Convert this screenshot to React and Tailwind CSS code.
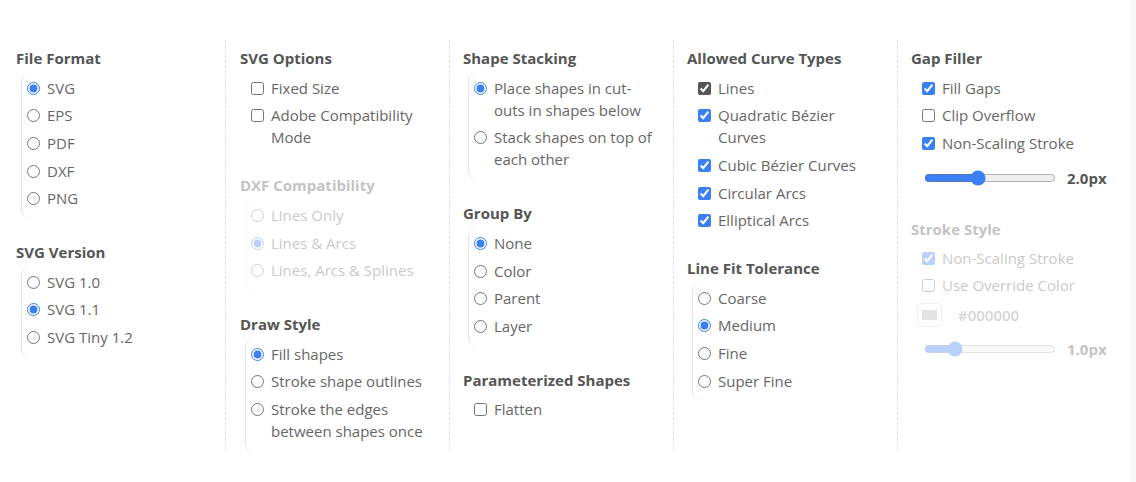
import React, { useState } from 'react';

const Section = ({ title, disabled, children }) => (
  <div className={disabled ? 'opacity-35 pointer-events-none' : ''}>
    <h3 className="text-[15px] font-bold leading-[22px] text-[#555]">{title}</h3>
    <div className="mt-[5px]">{children}</div>
  </div>
);

const RadioGroup = ({ name, options, value, onChange }) => (
  <div className="ml-[5px] flex flex-col rounded-l-lg border-l border-[#e3e3e3] pb-[6px] pl-[5px]">
    {options.map(opt => (
      <label key={opt} className="flex items-start gap-[7px] py-[2.8px] text-[15px] leading-[22px] text-[#666]">
        <input
          type="radio"
          name={name}
          checked={value === opt}
          onChange={() => onChange(opt)}
          className="mt-[5px] h-[13px] w-[13px] shrink-0 accent-[#3b7ff5]"
        />
        <span>{opt}</span>
      </label>
    ))}
  </div>
);

const CheckGroup = ({ items, values, onToggle }) => (
  <div className="flex flex-col pl-[11px]">
    {items.map(item => (
      <label key={item.label} className="flex items-start gap-[7px] py-[2.8px] text-[15px] leading-[22px] text-[#666]">
        <input
          type="checkbox"
          checked={!!values[item.label]}
          onChange={() => onToggle(item.label)}
          className={`mt-[5px] h-[13px] w-[13px] shrink-0 ${item.dark ? 'accent-[#555]' : 'accent-[#3b7ff5]'}`}
        />
        <span>{item.label}</span>
      </label>
    ))}
  </div>
);

const Slider = ({ value, onChange }) => (
  <div className="flex h-[22px] items-center pl-[13px]">
    <input
      type="range"
      min="0"
      max="5"
      step="0.1"
      value={value}
      onChange={e => onChange(parseFloat(e.target.value))}
      className="w-[132px] accent-[#3b7ff5]"
    />
    <span className="ml-[11px] text-[15px] font-bold leading-[22px] text-[#555]">{value.toFixed(1)}px</span>
  </div>
);

export default function App() {
  const [format, setFormat] = useState('SVG');
  const [version, setVersion] = useState('SVG 1.1');
  const [dxf, setDxf] = useState('Lines & Arcs');
  const [draw, setDraw] = useState('Fill shapes');
  const [stacking, setStacking] = useState('Place shapes in cut-outs in shapes below');
  const [group, setGroup] = useState('None');
  const [tolerance, setTolerance] = useState('Medium');
  const [gapWidth, setGapWidth] = useState(2.0);
  const [strokeWidth, setStrokeWidth] = useState(1.0);
  const [checks, setChecks] = useState({
    'Lines': true,
    'Quadratic Bézier Curves': true,
    'Cubic Bézier Curves': true,
    'Circular Arcs': true,
    'Elliptical Arcs': true,
    'Fill Gaps': true,
    'Non-Scaling Stroke': true,
    'stroke:Non-Scaling Stroke': true,
  });

  const toggle = key => setChecks(prev => ({ ...prev, [key]: !prev[key] }));

  return (
    <div className="flex h-[482px] w-full bg-white" style={{ fontFamily: '"Open Sans", "Noto Sans", sans-serif' }}>
      <div className="w-[1130px]">
        <div className="mt-10 flex h-[410px] pl-4">
          {/* column 1 */}
          <div className="flex w-[210px] flex-col gap-[23px] border-r border-dashed border-[#dcdcdc] pr-[13px] pt-[7px]">
            <Section title="File Format">
              <RadioGroup name="format" options={['SVG', 'EPS', 'PDF', 'DXF', 'PNG']} value={format} onChange={setFormat} />
            </Section>
            <Section title="SVG Version">
              <RadioGroup name="version" options={['SVG 1.0', 'SVG 1.1', 'SVG Tiny 1.2']} value={version} onChange={setVersion} />
            </Section>
          </div>

          {/* column 2 */}
          <div className="flex w-[224px] flex-col gap-[23px] border-r border-dashed border-[#dcdcdc] pl-[14px] pr-[13px] pt-[7px]">
            <Section title="SVG Options">
              <CheckGroup items={[{ label: 'Fixed Size' }, { label: 'Adobe Compatibility Mode' }]} values={checks} onToggle={toggle} />
            </Section>
            <Section title="DXF Compatibility" disabled>
              <RadioGroup name="dxf" options={['Lines Only', 'Lines & Arcs', 'Lines, Arcs & Splines']} value={dxf} onChange={setDxf} />
            </Section>
            <Section title="Draw Style">
              <RadioGroup
                name="draw"
                options={['Fill shapes', 'Stroke shape outlines', 'Stroke the edges between shapes once']}
                value={draw}
                onChange={setDraw}
              />
            </Section>
          </div>

          {/* column 3 */}
          <div className="flex w-[224px] flex-col gap-[23px] border-r border-dashed border-[#dcdcdc] pl-[13px] pr-[13px] pt-[7px]">
            <Section title="Shape Stacking">
              <RadioGroup
                name="stacking"
                options={['Place shapes in cut-outs in shapes below', 'Stack shapes on top of each other']}
                value={stacking}
                onChange={setStacking}
              />
            </Section>
            <Section title="Group By">
              <RadioGroup name="group" options={['None', 'Color', 'Parent', 'Layer']} value={group} onChange={setGroup} />
            </Section>
            <Section title="Parameterized Shapes">
              <CheckGroup items={[{ label: 'Flatten' }]} values={checks} onToggle={toggle} />
            </Section>
          </div>

          {/* column 4 */}
          <div className="flex w-[224px] flex-col gap-[23px] border-r border-dashed border-[#dcdcdc] pl-[13px] pr-[13px] pt-[7px]">
            <Section title="Allowed Curve Types">
              <CheckGroup
                items={[
                  { label: 'Lines', dark: true },
                  { label: 'Quadratic Bézier Curves' },
                  { label: 'Cubic Bézier Curves' },
                  { label: 'Circular Arcs' },
                  { label: 'Elliptical Arcs' },
                ]}
                values={checks}
                onToggle={toggle}
              />
            </Section>
            <Section title="Line Fit Tolerance">
              <RadioGroup name="tolerance" options={['Coarse', 'Medium', 'Fine', 'Super Fine']} value={tolerance} onChange={setTolerance} />
            </Section>
          </div>

          {/* column 5 */}
          <div className="flex flex-1 flex-col gap-[23px] pl-[13px] pt-[7px]">
            <Section title="Gap Filler">
              <CheckGroup
                items={[{ label: 'Fill Gaps' }, { label: 'Clip Overflow' }, { label: 'Non-Scaling Stroke' }]}
                values={checks}
                onToggle={toggle}
              />
              <div className="mb-[6px] mt-[10px]">
                <Slider value={gapWidth} onChange={setGapWidth} />
              </div>
            </Section>
            <Section title="Stroke Style" disabled>
              <div className="flex flex-col pl-[11px]">
                <label className="flex items-start gap-[7px] py-[2.5px] text-[15px] leading-[22px] text-[#666]">
                  <input
                    type="checkbox"
                    checked={!!checks['stroke:Non-Scaling Stroke']}
                    onChange={() => toggle('stroke:Non-Scaling Stroke')}
                    className="mt-[5px] h-[13px] w-[13px] shrink-0 accent-[#3b7ff5]"
                  />
                  <span>Non-Scaling Stroke</span>
                </label>
                <label className="flex items-start gap-[7px] py-[2.5px] text-[15px] leading-[22px] text-[#666]">
                  <input
                    type="checkbox"
                    checked={!!checks['Use Override Color']}
                    onChange={() => toggle('Use Override Color')}
                    className="mt-[5px] h-[13px] w-[13px] shrink-0 accent-[#3b7ff5]"
                  />
                  <span>Use Override Color</span>
                </label>
              </div>
              <div className="mt-[4px] flex items-center pl-[6px]">
                <div className="flex h-[24px] w-[25px] items-center justify-center rounded border border-[#d6d6d6]">
                  <div className="h-[10px] w-[15px] bg-[#b0b0b0]" />
                </div>
                <span className="ml-[16px] text-[15px] font-semibold leading-[22px] text-[#888]">#000000</span>
              </div>
              <div className="mt-[11px]">
                <Slider value={strokeWidth} onChange={setStrokeWidth} />
              </div>
            </Section>
          </div>
        </div>
      </div>
      <div className="flex-1 bg-[#f8f8f8]" />
    </div>
  );
}
